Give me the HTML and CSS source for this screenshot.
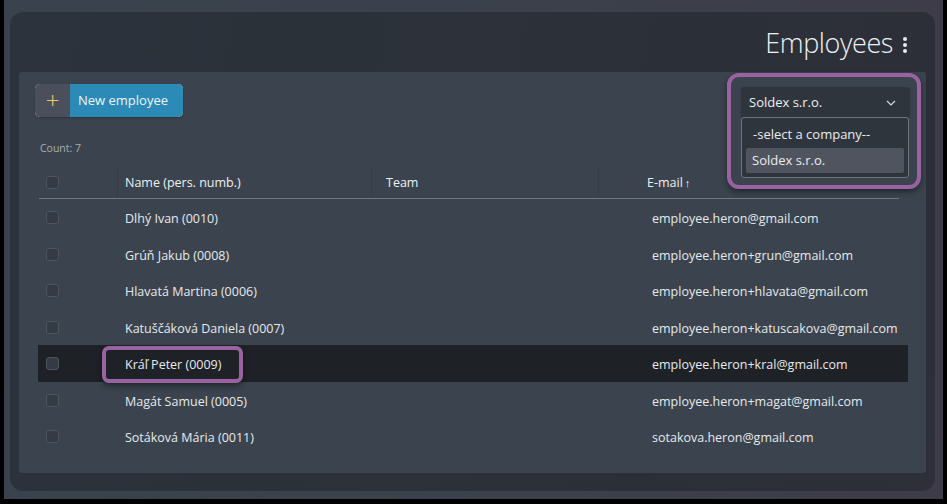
FILE: index.html
```html
<!DOCTYPE html>
<html lang="sk">
<head>
<meta charset="utf-8">
<title>Employees</title>
<link rel="stylesheet" href="styles.css">
</head>
<body>
<div class="frame">
  <div class="panel">
    <header class="page-head">
      <h1 class="title">Employees</h1>
      <span class="kebab"><i></i><i></i><i></i></span>
    </header>
    <section class="card">
      <div class="toolbar">
        <button class="btn-new"><span class="btn-icon">+</span><span class="btn-label">New employee</span></button>
        <div class="company">
          <div class="select">
            <span>Soldex s.r.o.</span>
            <svg class="chev" width="10" height="6" viewBox="0 0 10 6"><path d="M1 1l4 4 4-4" fill="none" stroke="#d8dce0" stroke-width="1.2"/></svg>
          </div>
          <ul class="options">
            <li>-select a company--</li>
            <li class="active">Soldex s.r.o.</li>
          </ul>
          <div class="ring ring-company"></div>
        </div>
      </div>
      <div class="count">Count: 7</div>
      <div class="table">
        <div class="thead">
          <div class="c-cb"><span class="cb"></span></div>
          <div class="c-name h">Name (pers. numb.)</div>
          <div class="c-team h">Team</div>
          <div class="c-mail h">E-mail<span class="arrow">↑</span></div>
        </div>
        <div class="row"><div class="c-cb"><span class="cb"></span></div><div class="c-name">Dlhý Ivan (0010)</div><div class="c-team"></div><div class="c-mail">employee.heron@gmail.com</div></div>
        <div class="row"><div class="c-cb"><span class="cb"></span></div><div class="c-name">Grúň Jakub (0008)</div><div class="c-team"></div><div class="c-mail">employee.heron+grun@gmail.com</div></div>
        <div class="row"><div class="c-cb"><span class="cb"></span></div><div class="c-name">Hlavatá Martina (0006)</div><div class="c-team"></div><div class="c-mail">employee.heron+hlavata@gmail.com</div></div>
        <div class="row"><div class="c-cb"><span class="cb"></span></div><div class="c-name">Katuščáková Daniela (0007)</div><div class="c-team"></div><div class="c-mail">employee.heron+katuscakova@gmail.com</div></div>
        <div class="row selected"><div class="c-cb"><span class="cb"></span></div><div class="c-name"><span class="ring ring-name"></span><span class="txt">Kráľ Peter (0009)</span></div><div class="c-team"></div><div class="c-mail">employee.heron+kral@gmail.com</div></div>
        <div class="row"><div class="c-cb"><span class="cb"></span></div><div class="c-name">Magát Samuel (0005)</div><div class="c-team"></div><div class="c-mail">employee.heron+magat@gmail.com</div></div>
        <div class="row"><div class="c-cb"><span class="cb"></span></div><div class="c-name">Sotáková Mária (0011)</div><div class="c-team"></div><div class="c-mail">sotakova.heron@gmail.com</div></div>
      </div>
    </section>
  </div>
</div>
</body>
</html>
```
FILE: styles.css
```css
* { box-sizing: border-box; }
html, body { margin: 0; padding: 0; }
body {
  background: #000;
  width: 947px;
  height: 504px;
  overflow: hidden;
  font-family: "Open Sans", "Noto Sans", sans-serif;
  font-size: 12.5px;
  color: #e6e9ec;
}
.frame {
  margin: 0 4px 0 4px;
  height: 499px;
  padding: 12px 8px 8px 6px;
  background: linear-gradient(90deg, #3a434d 0%, #3b404b 60%, #3d3c48 100%);
}
.panel {
  height: 479px;
  border-radius: 13px;
  background: linear-gradient(100deg, #2d333c 0%, #2b3139 30%, #2d323a 45%, #2b3038 70%, #2e2f38 100%);
  padding: 0 9px 0 9px;
  display: flex;
  flex-direction: column;
}
.page-head {
  height: 60px;
  display: flex;
  justify-content: flex-end;
  align-items: center;
  padding: 1px 19px 0 0;
}
.title {
  margin: 0;
  font-weight: 300;
  font-size: 27px;
  color: #eef0f2;
  letter-spacing: -0.4px;
}
.kebab {
  display: flex;
  flex-direction: column;
  gap: 2px;
  margin-left: 10px;
  padding-top: 5px;
}
.kebab i {
  width: 4px; height: 4px; border-radius: 50%;
  background: #e8ebee;
  display: block;
}
.card {
  height: 401px;
  background: #3b444e;
  border-radius: 3px;
  padding: 12px 0 0 0;
  position: relative;
}
.toolbar {
  display: flex;
  justify-content: space-between;
  align-items: flex-start;
  padding: 0 16px 0 16px;
  height: 33px;
}
.btn-new {
  display: flex;
  height: 33px;
  border: 0;
  padding: 0;
  border-radius: 5px;
  overflow: hidden;
  font: inherit;
  box-shadow: 0 1px 2px rgba(0,0,0,.25);
}
.btn-icon {
  width: 35px;
  background: #4a4f5b;
  color: #ecc96d;
  font-size: 24px;
  font-weight: 300;
  line-height: 31px;
  text-align: center;
}
.btn-label {
  background: #2b8ab6;
  color: #eef3f6;
  padding: 0 15px 0 8px;
  line-height: 33px;
  font-size: 13px;
}
.company {
  position: relative;
  width: 169px;
  margin-top: 3px;
}
.select {
  height: 30px;
  background: #2f353d;
  border-radius: 3px;
  display: flex;
  align-items: center;
  justify-content: space-between;
  padding: 0 14px 0 8px;
  color: #eef0f2;
  font-size: 13px;
  box-shadow: 0 1px 2px rgba(0,0,0,.3);
}
.chev { margin-top: 1px; }
.options {
  position: absolute;
  left: 0;
  top: 30px;
  width: 168px;
  margin: 0;
  padding: 4px 4px 4px 4px;
  list-style: none;
  background: #2f353d;
  border: 1px solid #6f747b;
  border-radius: 3px;
  z-index: 3;
  font-size: 13px;
}
.options li {
  height: 25px;
  line-height: 25px;
  padding-left: 7px;
  color: #e9ecef;
  border-radius: 2px;
}
.options li:first-child { padding-left: 7px; margin-bottom: 1px; }
.options li.active { background: #50545e; padding-left: 6px; }
.ring {
  position: absolute;
  border: 4px solid #9a62a0;
  border-radius: 12px;
  pointer-events: none;
  box-shadow: 0 3px 6px rgba(0,0,0,.45);
}
.ring-company {
  left: -14px;
  top: -14px;
  width: 194px;
  height: 116px;
  z-index: 4;
}
.count {
  margin: 24px 0 0 21px;
  font-size: 10.5px;
  color: #a7adb3;
  height: 14px;
  line-height: 14px;
}
.table {
  margin: 10px 0 0 19px;
  width: 870px;
}
.thead, .row {
  display: grid;
  grid-template-columns: 79px 254px 227px 310px;
  align-items: center;
}
.thead {
  height: 34px;
  position: relative;
}
.thead::after {
  content: "";
  position: absolute;
  left: 1px;
  right: 9px;
  bottom: 0;
  height: 1px;
  background: #72777d;
}
.thead > div {
  height: 33px;
  display: flex;
  align-items: center;
  margin-top: 1px;
}
.thead .h { border-left: 1px solid #353d46; color: #eef0f2; }
.thead .c-name { padding-left: 7px; }
.thead .c-team { padding-left: 14px; }
.thead .c-mail { padding-left: 48px; }
.arrow { font-size: 11px; margin-left: 2px; font-weight: 600; }
.row {
  height: 36.5px;
  padding-top: 3px;
  color: #e6e9ec;
}
.row.selected { background: #1e2227; }
.row .c-name { padding-left: 8px; position: relative; }
.row .c-mail { padding-left: 54px; white-space: nowrap; }
.c-cb { padding-left: 8px; display: flex; align-items: center; }
.row .c-cb { margin-top: -2px; }
.cb {
  width: 13px;
  height: 13px;
  border: 1px solid #4c545e;
  background: #343b44;
  border-radius: 3px;
  display: block;
}
.ring-name {
  left: -15px;
  top: 50%;
  margin-top: -19px;
  width: 141px;
  height: 37px;
  border-radius: 7px;
  background: #1e2227;
  z-index: 0;
}
.txt { position: relative; z-index: 1; }
```
